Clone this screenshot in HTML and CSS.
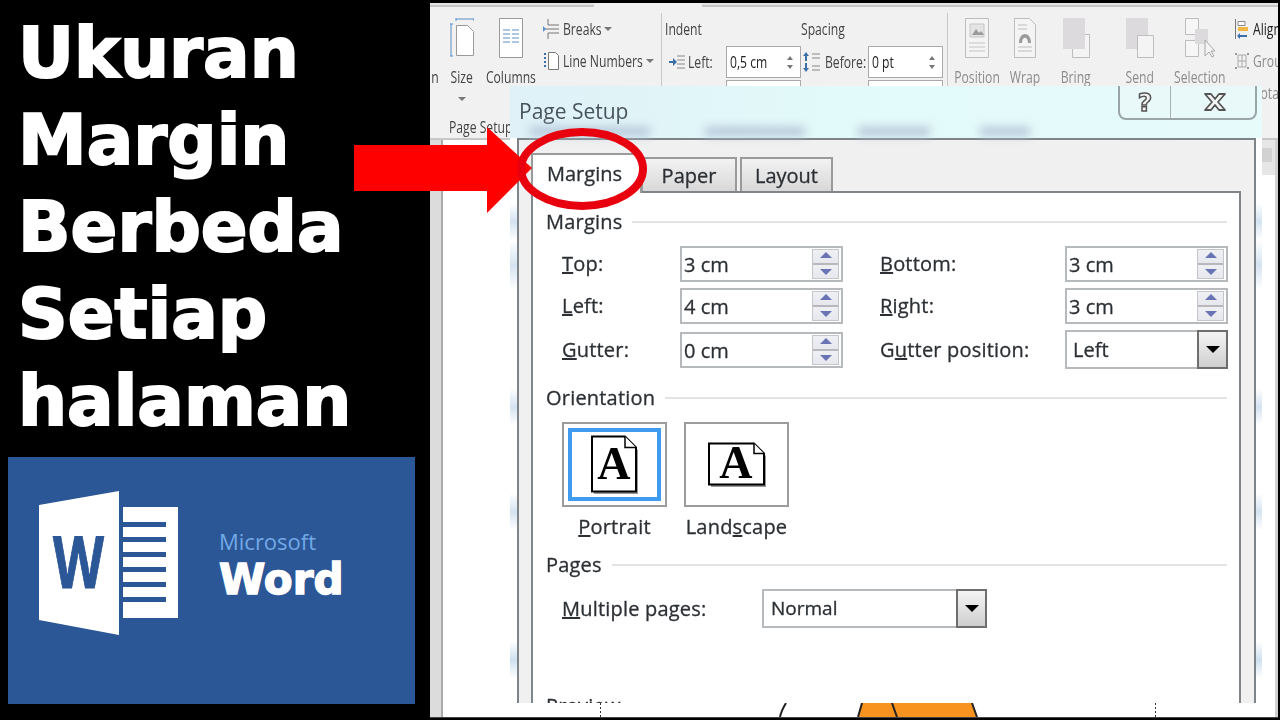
FILE: index.html
```html
<!DOCTYPE html>
<html lang="id">
<head>
  <meta charset="UTF-8">
  <meta name="viewport" content="width=device-width, initial-scale=1.0">
  <title>Ukuran Margin Berbeda Setiap halaman</title>
  <link rel="stylesheet" href="styles.css">
</head>
<body>
  <div class="stage">
    <div class="side">
      <h1>Ukuran<br>Margin<br>Berbeda<br>Setiap<br>halaman</h1>
      <div class="word-card">
        <svg class="word-icon" width="140" height="145" viewBox="0 0 140 145">
          <path d="M84 16h55v111H84z" fill="#fff"/>
          <path d="M84 31h43v5H84zM84 46h43v5H84zM84 61h43v5H84zM84 76h43v5H84zM84 91h43v5H84zM84 106h43v5H84z" fill="#2b5797"/>
          <path d="M0 14L80 0v144L0 129z" fill="#fff"/>
          <text class="word-w" x="14" y="97" textLength="51" lengthAdjust="spacingAndGlyphs">W</text>
        </svg>
        <div class="word-name">
          <div class="word-ms">Microsoft</div>
          <div class="word-big">Word</div>
        </div>
      </div>
    </div>

    <div class="shot">
      <div class="tabline"><span class="tabline-a"></span><span class="tabline-gap"></span><span class="tabline-b"></span></div>
      <div class="ribbon">
        <div class="group group-page">
          <div class="tools">
            <div class="tool tool-n"><div class="tool-icon"></div><span class="narrow">n</span></div>
            <div class="tool tool-size">
              <div class="tool-icon">
                <svg width="24" height="40" viewBox="0 0 24 40"><path d="M1 6v32M0 6h3M0 38h3M6 1h18M6 0v3M24 0v3" stroke="#5b8fc7" fill="none"/><path d="M6.5 7.5h11l6 6v24h-17z" fill="#fff" stroke="#9a9a9a"/></svg>
              </div>
              <span class="narrow">Size</span>
              <i class="caret"></i>
            </div>
            <div class="tool tool-columns">
              <div class="tool-icon">
                <svg width="24" height="40" viewBox="0 0 24 40"><path d="M.5.5h23v39H.5z" fill="#fff" stroke="#9a9a9a"/><path d="M4 12h7M13 12h7M4 16h7M13 16h7M4 20h7M13 20h7M4 24h7M13 24h7" stroke="#5b8fc7"/></svg>
              </div>
              <span class="narrow">Columns</span>
            </div>
            <div class="stack stack-breaks">
              <div class="stack-row">
                <svg width="16" height="22" viewBox="0 0 16 22"><path d="M5 1v6h11M5 21v-6h11M0 11h16" stroke="#777" fill="none"/><path d="M0 8l3 3-3 3z" fill="#5b8fc7"/></svg>
                <span class="narrow">Breaks</span><i class="caret caret-side"></i>
              </div>
              <div class="stack-row">
                <svg width="16" height="20" viewBox="0 0 16 20"><path d="M5.500 1.500h7l3 3v14h-10z" fill="#fff" stroke="#777"/><path d="M1 3h2M1 7h2M1 11h2M1 15h2" stroke="#3c6fa8" stroke-width="2"/></svg>
                <span class="narrow">Line Numbers</span><i class="caret caret-side"></i>
              </div>
            </div>
          </div>
          <div class="group-label"><span class="narrow">Page Setup</span></div>
        </div>
        <div class="rib-sep"></div>

        <div class="group-para">
          <div class="para-col para-indent">
            <div class="para-head"><span class="narrow">Indent</span></div>
            <div class="para-row">
              <svg class="para-icon" width="16" height="14" viewBox="0 0 16 14"><path d="M8 1h8M8 5h8M8 9h8M8 13h8" stroke="#888"/><path d="M0 6h4V3l4 4-4 4V8H0z" fill="#3c6fa8"/></svg>
              <span class="para-label"><span class="narrow">Left:</span></span>
              <div class="rib-input"><span class="narrow">0,5 cm</span><b class="rib-spin"></b></div>
            </div>
            <div class="para-row"><span class="rib-input rib-input-low"></span></div>
          </div>
          <div class="para-col para-spacing">
            <div class="para-head"><span class="narrow">Spacing</span></div>
            <div class="para-row">
              <svg class="para-icon" width="17" height="20" viewBox="0 0 17 20"><path d="M9 2h8M9 6h8M9 14h8M9 18h8" stroke="#888"/><path d="M3 0l3 4H4v5H2V4H0zM3 20l3-4H4v-5H2v5H0z" fill="#3c6fa8"/></svg>
              <span class="para-label"><span class="narrow">Before:</span></span>
              <div class="rib-input"><span class="narrow">0 pt</span><b class="rib-spin"></b></div>
            </div>
            <div class="para-row"><span class="rib-input rib-input-low"></span></div>
          </div>
        </div>
        <div class="rib-sep"></div>

        <div class="group-arrange">
          <div class="tool tool-off tool-position">
            <div class="tool-icon">
              <svg width="24" height="40" viewBox="0 0 24 40"><path d="M.5.500h23v39H.5z" fill="#f4f4f4" stroke="#bdbdbd"/><path d="M5 6h14v13H5z" fill="#e4e4e4" stroke="#c4c4c4"/><path d="M7 17l4-6 3 4 2-2 3 4z" fill="#9a9a9a"/><path d="M4 25h16M4 29h16M4 33h16" stroke="#c4c4c4"/></svg>
            </div>
            <span class="narrow">Position</span>
          </div>
          <div class="tool tool-off tool-wrap">
            <div class="tool-icon">
              <svg width="22" height="40" viewBox="0 0 22 40"><path d="M.5.500h15l6 6v33H.5z" fill="#f4f4f4" stroke="#bdbdbd"/><path d="M4 7h9M4 11h9M4 29h14M4 33h14" stroke="#bdbdbd"/><path d="M5 25c0-12 12-12 12 0h-3c0-7-6-7-6 0z" fill="#9a9a9a"/></svg>
            </div>
            <span class="narrow">Wrap</span>
          </div>
          <div class="tool tool-off tool-bring">
            <div class="tool-icon">
              <svg width="27" height="40" viewBox="0 0 27 40"><path d="M9.500 16.500h17v23h-17z" fill="#f4f4f4" stroke="#bdbdbd"/><path d="M0 0h22v31H0z" fill="#dcdadc"/></svg>
            </div>
            <span class="narrow">Bring</span>
          </div>
          <div class="tool tool-off tool-send">
            <div class="tool-icon">
              <svg width="28" height="40" viewBox="0 0 28 40"><path d="M0 0h22v31H0z" fill="#dcdadc"/><path d="M11.500 17.500h16v22h-16z" fill="#f4f4f4" stroke="#bdbdbd"/></svg>
            </div>
            <span class="narrow">Send</span>
          </div>
          <div class="tool tool-off tool-selection">
            <div class="tool-icon">
              <svg width="30" height="40" viewBox="0 0 30 40"><path d="M.5.500h13v16H.5zM.5 22.500h13v16H.5z" fill="#f6f6f6" stroke="#bdbdbd"/><path d="M10 11h13v15H10z" fill="#dcdadc"/><path d="M20 22v16l4-4 3 5 2-1-3-5h4z" fill="#f4f4f4" stroke="#a8a8a8"/></svg>
            </div>
            <span class="narrow">Selection</span>
          </div>
          <div class="stack stack-align">
            <div class="stack-row">
              <svg width="14" height="20" viewBox="0 0 14 20"><path d="M.5 0v20" stroke="#777"/><path d="M3 2.500h7v4H3z" fill="#fff" stroke="#888"/><path d="M3 8h10v4H3z" fill="#f0b840"/><path d="M12 16H5v-2l-3 3 3 3v-2h7z" fill="#3c6fa8"/></svg>
              <span class="narrow">Align</span>
            </div>
            <div class="stack-row stack-off">
              <svg width="14" height="18" viewBox="0 0 14 18"><path d="M3 3h8v12H3z" fill="none" stroke="#aaa"/><path d="M7 3v12M3 9h8" stroke="#aaa"/><path d="M0 1h2v2H0zM12 1h2v2h-2zM0 15h2v2H0zM12 15h2v2h-2z" fill="#999"/></svg>
              <span class="narrow">Group</span>
            </div>
            <div class="stack-row stack-off">
              <svg width="14" height="18" viewBox="0 0 14 18"></svg>
              <span class="narrow">Rotate</span>
            </div>
          </div>
        </div>
      </div>

      <div class="work">
        <div class="ruler"></div>
        <div class="page">
          <svg class="page-strip" width="819" height="14" viewBox="0 0 819 14">
            <path d="M157.500 0v14M712.500 0v14" stroke="#333" stroke-dasharray="2 2"/>
            <path d="M343 0c-3 5-5 9-6 14" stroke="#222" stroke-width="2" fill="none"/>
            <path d="M419 0h110l5 14H415z" fill="#f7931e"/>
            <path d="M419 0l-4 14M529 0l5 14M449 0l5 14" stroke="#222" stroke-width="2" fill="none"/>
          </svg>
        </div>
        <div class="rail">
          <div class="rail-top"><span class="rail-tab"></span></div>
        </div>
      </div>

      <div class="dialog">
        <div class="titlebar">
          <span class="title">Page Setup</span>
          <span class="smudge smudge-a"></span>
          <span class="smudge smudge-b"></span>
          <span class="smudge smudge-c"></span>
          <span class="smudge smudge-d"></span>
          <div class="win-btns">
            <span class="win-btn win-help">?</span>
            <span class="win-btn win-close">
              <svg width="24" height="20" viewBox="0 0 24 20"><path d="M2 2h6l4 5 4-5h6l-7 8 7 8h-6l-4-5-4 5H2l7-8z" fill="#f4f6f6" stroke="#555" stroke-width="1.800" stroke-linejoin="round"/></svg>
            </span>
          </div>
        </div>
        <div class="body">
          <div class="tabs">
            <div class="tab tab-active">Margins</div>
            <div class="tab tab-paper">Paper</div>
            <div class="tab tab-layout">Layout</div>
          </div>
          <div class="pane">
            <div class="sect"><span>Margins</span><i></i></div>
            <div class="margin-grid">
              <label><u>T</u>op:</label>
              <div class="field">3 cm<b class="spin"></b></div>
              <label class="col2"><u>B</u>ottom:</label>
              <div class="field">3 cm<b class="spin"></b></div>
              <label><u>L</u>eft:</label>
              <div class="field">4 cm<b class="spin"></b></div>
              <label class="col2"><u>R</u>ight:</label>
              <div class="field">3 cm<b class="spin"></b></div>
              <label class="row3"><u>G</u>utter:</label>
              <div class="field row3">0 cm<b class="spin"></b></div>
              <label class="col2 row3">G<u>u</u>tter position:</label>
              <div class="combo combo-gutter row3">Left<b class="combo-btn"></b></div>
            </div>

            <div class="sect sect-orient"><span>Orientation</span><i></i></div>
            <div class="orient">
              <div class="orient-item">
                <div class="orient-btn orient-on">
                  <svg width="50" height="60" viewBox="0 0 50 60">
                    <path d="M4 4h33l11 11v44H4z" fill="#999"/>
                    <path d="M2 1.500h33l11 11v44H2z" fill="#fff" stroke="#000" stroke-width="2"/>
                    <path d="M35 1.500v11h11" fill="#fff" stroke="#000" stroke-width="1.500"/>
                    <text class="page-a" x="24" y="44">A</text>
                  </svg>
                </div>
                <div class="orient-name"><u>P</u>ortrait</div>
              </div>
              <div class="orient-item">
                <div class="orient-btn">
                  <svg width="60" height="46" viewBox="0 0 60 46">
                    <path d="M4 4h45l10 10v31H4z" fill="#999"/>
                    <path d="M2 1.500h45l10 10v31H2z" fill="#fff" stroke="#000" stroke-width="2"/>
                    <path d="M47 1.500v10h10" fill="#fff" stroke="#000" stroke-width="1.500"/>
                    <text class="page-a" x="29" y="36">A</text>
                  </svg>
                </div>
                <div class="orient-name">Land<u>s</u>cape</div>
              </div>
            </div>

            <div class="sect sect-pages"><span>Pages</span><i></i></div>
            <div class="pages-row">
              <label><u>M</u>ultiple pages:</label>
              <div class="combo combo-pages">Normal<b class="combo-btn"></b></div>
            </div>
            <div class="preview">Preview</div>
          </div>
        </div>
      </div>
    </div>

    <svg class="callout" width="300" height="100" viewBox="0 0 300 100">
      <path d="M0 25h133V7l45 41-45 45V71H0z" fill="#f00"/>
      <ellipse cx="228" cy="49" rx="61" ry="37" fill="none" stroke="#e8000f" stroke-width="8"/>
    </svg>
  </div>
</body>
</html>
```

FILE: styles.css
```css
* {
  box-sizing: border-box;
}
body {
  margin: 0;
  background-color: #000;
  font-family: "Open Sans", sans-serif;
}
.stage {
  position: relative;
  display: flex;
  width: 1280px;
  height: 720px;
  overflow: hidden;
  background-color: #000;
}

/* left column */
.side {
  width: 430px;
  padding: 10px 15px 0 8px;
  flex-shrink: 0;
}
h1 {
  margin: 0 0 12px 10px;
  font-family: "DejaVu Sans", sans-serif;
  font-size: 69px;
  font-weight: bold;
  line-height: 87px;
  color: #fff;
  -webkit-text-stroke: 2px #fff;
  white-space: nowrap;
}
.word-card {
  display: flex;
  align-items: flex-start;
  gap: 40px;
  width: 407px;
  height: 247px;
  padding: 34px 0 0 31px;
  background-color: #2b5797;
}
.word-w {
  font-family: "Open Sans", sans-serif;
  font-size: 72px;
  font-weight: bold;
  fill: #2b5797;
  stroke: #2b5797;
  stroke-width: 1px;
}
.word-name {
  margin-top: 35px;
}
.word-ms {
  font-size: 22px;
  line-height: 30px;
  color: #72a9e6;
}
.word-big {
  margin-top: 2px;
  font-family: "DejaVu Sans", sans-serif;
  font-size: 42px;
  font-weight: bold;
  line-height: 44px;
  color: #fff;
  -webkit-text-stroke: 1.5px #fff;
}

/* screenshot */
.shot {
  position: relative;
  display: flex;
  flex-direction: column;
  width: 848px;
  height: 715px;
  margin-top: 3px;
  overflow: hidden;
  background-color: #f1f1f1;
  border-bottom: 1px solid #444;
  filter: blur(0.45px);
}
.tabline {
  display: flex;
  height: 4px;
  flex-shrink: 0;
}
.tabline-a {
  width: 164px;
  background-color: #e4e4e4;
  border-bottom: 2px solid #c6c6c6;
}
.tabline-gap {
  width: 108px;
}
.tabline-b {
  flex: 1;
  background-color: #e4e4e4;
  border-bottom: 2px solid #c6c6c6;
}
.ribbon {
  display: flex;
  align-items: flex-start;
  height: 133px;
  padding-top: 6px;
  flex-shrink: 0;
  border-bottom: 2px solid #c8c8c8;
  font-size: 16px;
  color: #444;
}
.narrow {
  display: inline-block;
  white-space: nowrap;
  transform: scaleX(0.76);
}
.rib-sep {
  width: 1px;
  height: 73px;
  flex-shrink: 0;
  background-color: #c8c8c8;
}
.group {
  width: 231px;
  flex-shrink: 0;
}
.tools {
  display: flex;
  align-items: flex-start;
}
.tool {
  display: flex;
  flex-direction: column;
  align-items: center;
  flex-shrink: 0;
}
.tool .narrow {
  line-height: 28px;
}
.tool-icon {
  display: flex;
  align-items: center;
  justify-content: center;
  height: 50px;
}
.tool-n { width: 10px; }
.tool-size { width: 31px; margin-left: 6px; }
.tool-columns { width: 50px; margin-left: 9px; }
.caret {
  width: 0;
  height: 0;
  margin-top: 6px;
  margin-bottom: 6px;
  border: 4px solid transparent;
  border-top: 4px solid #777;
  border-bottom: 0;
}
.stack {
  flex-shrink: 0;
}
.stack-breaks {
  width: 118px;
  margin-left: 7px;
}
.stack-row {
  display: flex;
  align-items: center;
  gap: 4px;
  height: 32px;
}
.stack-row svg {
  flex-shrink: 0;
}
.stack-row .narrow {
  transform-origin: 0 50%;
}
.stack-breaks .stack-row:first-child .caret-side { margin: 0 0 0 -14px; }
.stack-breaks .stack-row:last-child .caret-side { margin: 0 0 0 -26px; }
.group-label {
  margin-top: 9px;
  padding-left: 19px;
  line-height: 22px;
}
.group-label .narrow {
  transform-origin: 0 50%;
}

.group-para {
  display: flex;
  width: 285px;
  flex-shrink: 0;
}
.para-col {
  flex-shrink: 0;
}
.para-indent { width: 139px; }
.para-spacing { width: 146px; }
.para-head {
  height: 32px;
  line-height: 32px;
}
.para-head .narrow { transform-origin: 0 50%; }
.para-indent .para-head { padding-left: 3px; }
.para-row {
  display: flex;
  align-items: center;
  height: 34px;
}
.para-indent .para-icon { margin-left: 7px; }
.para-spacing .para-icon { margin-left: 2px; }
.para-indent .para-label { width: 38px; margin-left: 3px; }
.para-spacing .para-label { width: 43px; margin-left: 5px; }
.para-label .narrow { transform-origin: 0 50%; }
.rib-input {
  position: relative;
  display: block;
  width: 75px;
  height: 32px;
  padding-left: 3px;
  line-height: 30px;
  background-color: #fff;
  border: 1px solid #aaa;
  color: #222;
}
.rib-input .narrow { transform-origin: 0 50%; }
.para-row .rib-input-low { margin-left: 64px; }
.para-spacing .para-row .rib-input-low { margin-left: 67px; }
.rib-spin {
  position: absolute;
  top: 9px;
  right: 7px;
  width: 0;
  height: 0;
  border: 3px solid transparent;
  border-bottom: 4px solid #777;
  border-top: 0;
}
.rib-spin::after {
  content: "";
  position: absolute;
  top: 9px;
  left: -3px;
  border: 3px solid transparent;
  border-top: 4px solid #777;
  border-bottom: 0;
}

.group-arrange {
  display: flex;
  align-items: flex-start;
}
.tool-off {
  color: #8c8c8c;
}
.tool-position { width: 44px; margin-left: 7px; }
.tool-wrap { width: 29px; margin-left: 11px; }
.tool-bring { width: 28px; margin-left: 23px; }
.tool-send { width: 27px; margin-left: 36px; }
.tool-selection { width: 50px; margin-left: 22px; }
.stack-align {
  width: 60px;
  margin-left: 10px;
  color: #222;
}
.stack-off {
  color: #8c8c8c;
}

.work {
  display: flex;
  flex: 1;
  min-height: 0;
}
.ruler {
  width: 13px;
  flex-shrink: 0;
  background-color: #dcdcdc;
  border-right: 2px solid #aaa;
}
.page {
  display: flex;
  flex: 1;
  flex-direction: column;
  justify-content: flex-end;
  background-color: #fff;
}
.page-strip {
  display: block;
}
.rail {
  width: 16px;
  flex-shrink: 0;
  background-color: #fff;
  border-right: 3px solid #d0d0d0;
}
.rail-top {
  height: 35px;
  padding-top: 8px;
  background-color: #e6e6e6;
}
.rail-tab {
  display: block;
  width: 10px;
  height: 14px;
  background-color: #d2d2d2;
}

/* Page Setup window */
.dialog {
  position: absolute;
  top: 83px;
  left: 80px;
  display: flex;
  flex-direction: column;
  width: 752px;
  height: 617px;
  padding: 0 6px 0 7px;
  overflow: hidden;
  background: linear-gradient(to bottom, #fff 0, #fff 19%, #d4e3f1 22%, #fff 25%, #d4e3f1 29%, #fff 33%, #fff 49%, #d4e3f1 52%, #fff 55%, #fff 66%, #d4e3f1 69%, #fff 72%, #fff 90%, #cfe0f0 93%, #fff 96%);
  color: #2c3034;
}
.titlebar {
  position: relative;
  height: 52px;
  margin: 0 -6px 0 -7px;
  padding: 11px 0 0 9px;
  flex-shrink: 0;
  background: linear-gradient(to right, #dff1f7, #e2fafa 45%, #e6fbfa 100%);
}
.title {
  font-size: 21px;
  line-height: 28px;
  color: #48525c;
}
.smudge {
  position: absolute;
  top: 41px;
  height: 9px;
  background-color: #b5c6d8;
  filter: blur(5px);
}
.smudge-a { left: 20px; width: 120px; }
.smudge-b { left: 195px; width: 100px; }
.smudge-c { left: 348px; width: 72px; }
.smudge-d { left: 470px; width: 50px; }
.win-btns {
  position: absolute;
  top: 0;
  right: 5px;
  display: flex;
  width: 139px;
  height: 34px;
  background-color: #e9f8f9;
  border: 2px solid #9aa5a8;
  border-top: 0;
  border-radius: 0 0 8px 8px;
}
.win-btn {
  display: flex;
  align-items: center;
  justify-content: center;
}
.win-help {
  width: 51px;
  border-right: 1px solid #a5b0b3;
  font-family: "DejaVu Sans", sans-serif;
  font-size: 25px;
  font-weight: bold;
  color: #f4f6f6;
  -webkit-text-stroke: 1.5px #555;
}
.win-close {
  flex: 1;
  padding-left: 4px;
}
.body {
  height: 700px;
  padding: 13px 13px 0 12px;
  flex-shrink: 0;
  background-color: #f0f0f0;
  border: 2px solid #7d8387;
}
.tabs {
  display: flex;
  align-items: flex-end;
  height: 38px;
  -webkit-text-stroke: 0.3px #2c3034;
}
.tab {
  position: relative;
  height: 34px;
  font-size: 20px;
  line-height: 34px;
  text-align: center;
  background: linear-gradient(to bottom, #f2f2f2, #d8d8d8);
  border: 2px solid #9a9a9a;
  border-bottom: 0;
}
.tab-active {
  z-index: 1;
  width: 111px;
  height: 40px;
  margin-bottom: -2px;
  padding-left: 14px;
  line-height: 38px;
  text-align: left;
  background: #fff;
}
.tab-paper {
  width: 96px;
  margin-left: -1px;
}
.tab-layout {
  width: 93px;
  margin-left: 3px;
}
.pane {
  height: 640px;
  padding: 16px 12px 0 13px;
  font-size: 20px;
  line-height: 26px;
  letter-spacing: 0.2px;
  background-color: #fff;
  border: 2px solid #80858a;
  -webkit-text-stroke: 0.3px #2c3034;
}
.sect {
  display: flex;
  align-items: center;
  gap: 10px;
  height: 26px;
}
.sect i {
  flex: 1;
  height: 2px;
  background-color: #e2e4e6;
}
.margin-grid {
  display: grid;
  grid-template-columns: 118px 163px 222px 163px;
  grid-auto-rows: 36px;
  row-gap: 6px;
  align-items: center;
  margin: 11px 0 0 16px;
}
.margin-grid .col2 {
  margin-left: 37px;
}
.row3 {
  position: relative;
  top: 2px;
}
.field {
  position: relative;
  height: 36px;
  padding-left: 2px;
  line-height: 34px;
  letter-spacing: 0;
  background-color: #fff;
  border: 2px solid #b7babd;
}
.spin {
  position: absolute;
  top: 1px;
  right: 2px;
  width: 27px;
  height: 30px;
  background: linear-gradient(to bottom, #eef0f4 0, #e6e8ee 46%, #b8b8bc 46%, #b8b8bc 54%, #eef0f4 54%, #e6e8ee 100%);
  border: 1px solid #c4c6ca;
}
.spin::before,
.spin::after {
  content: "";
  position: absolute;
  left: 7px;
  border: 6px solid transparent;
}
.spin::before {
  top: 2px;
  border-bottom: 6px solid #6a74b4;
  border-top: 0;
}
.spin::after {
  bottom: 3px;
  border-top: 6px solid #6a74b4;
  border-bottom: 0;
}
.combo {
  position: relative;
  height: 39px;
  padding-left: 6px;
  line-height: 35px;
  letter-spacing: 0;
  background-color: #fff;
  border: 2px solid #b7babd;
}
.combo-gutter {
  top: 1px;
}
.combo-pages {
  width: 225px;
  padding-left: 7px;
  font-size: 19px;
}
.combo-btn {
  position: absolute;
  top: -2px;
  right: -2px;
  width: 31px;
  height: 39px;
  background: linear-gradient(to bottom, #f4f4f4, #cfcfcf);
  border: 2px solid #6e6e6e;
}
.combo-btn::after {
  content: "";
  position: absolute;
  top: 14px;
  left: 7px;
  border: 7px solid transparent;
  border-top: 7px solid #000;
  border-bottom: 0;
}
.sect-orient {
  margin-top: 19px;
}
.orient {
  display: flex;
  gap: 17px;
  margin: 11px 0 0 16px;
}
.orient-item {
  width: 105px;
}
.orient-btn {
  display: flex;
  align-items: center;
  justify-content: center;
  height: 85px;
  background-color: #fff;
  border: 2px solid #9c9c9c;
}
.orient-on {
  box-shadow: inset 0 0 0 4px #fff, inset 0 0 0 8px #3f9cf0;
}
.orient-name {
  margin-top: 7px;
  text-align: center;
  white-space: nowrap;
}
.page-a {
  font-family: "Liberation Serif", serif;
  font-size: 46px;
  font-weight: bold;
  text-anchor: middle;
  fill: #000;
  stroke: none;
}
.sect-pages {
  margin-top: 12px;
}
.pages-row {
  display: flex;
  align-items: center;
  margin: 11px 0 0 16px;
}
.pages-row label {
  width: 200px;
}
.preview {
  margin-top: 65px;
}

/* red arrow and ring on top of the picture */
.callout {
  position: absolute;
  top: 120px;
  left: 354px;
}
```
